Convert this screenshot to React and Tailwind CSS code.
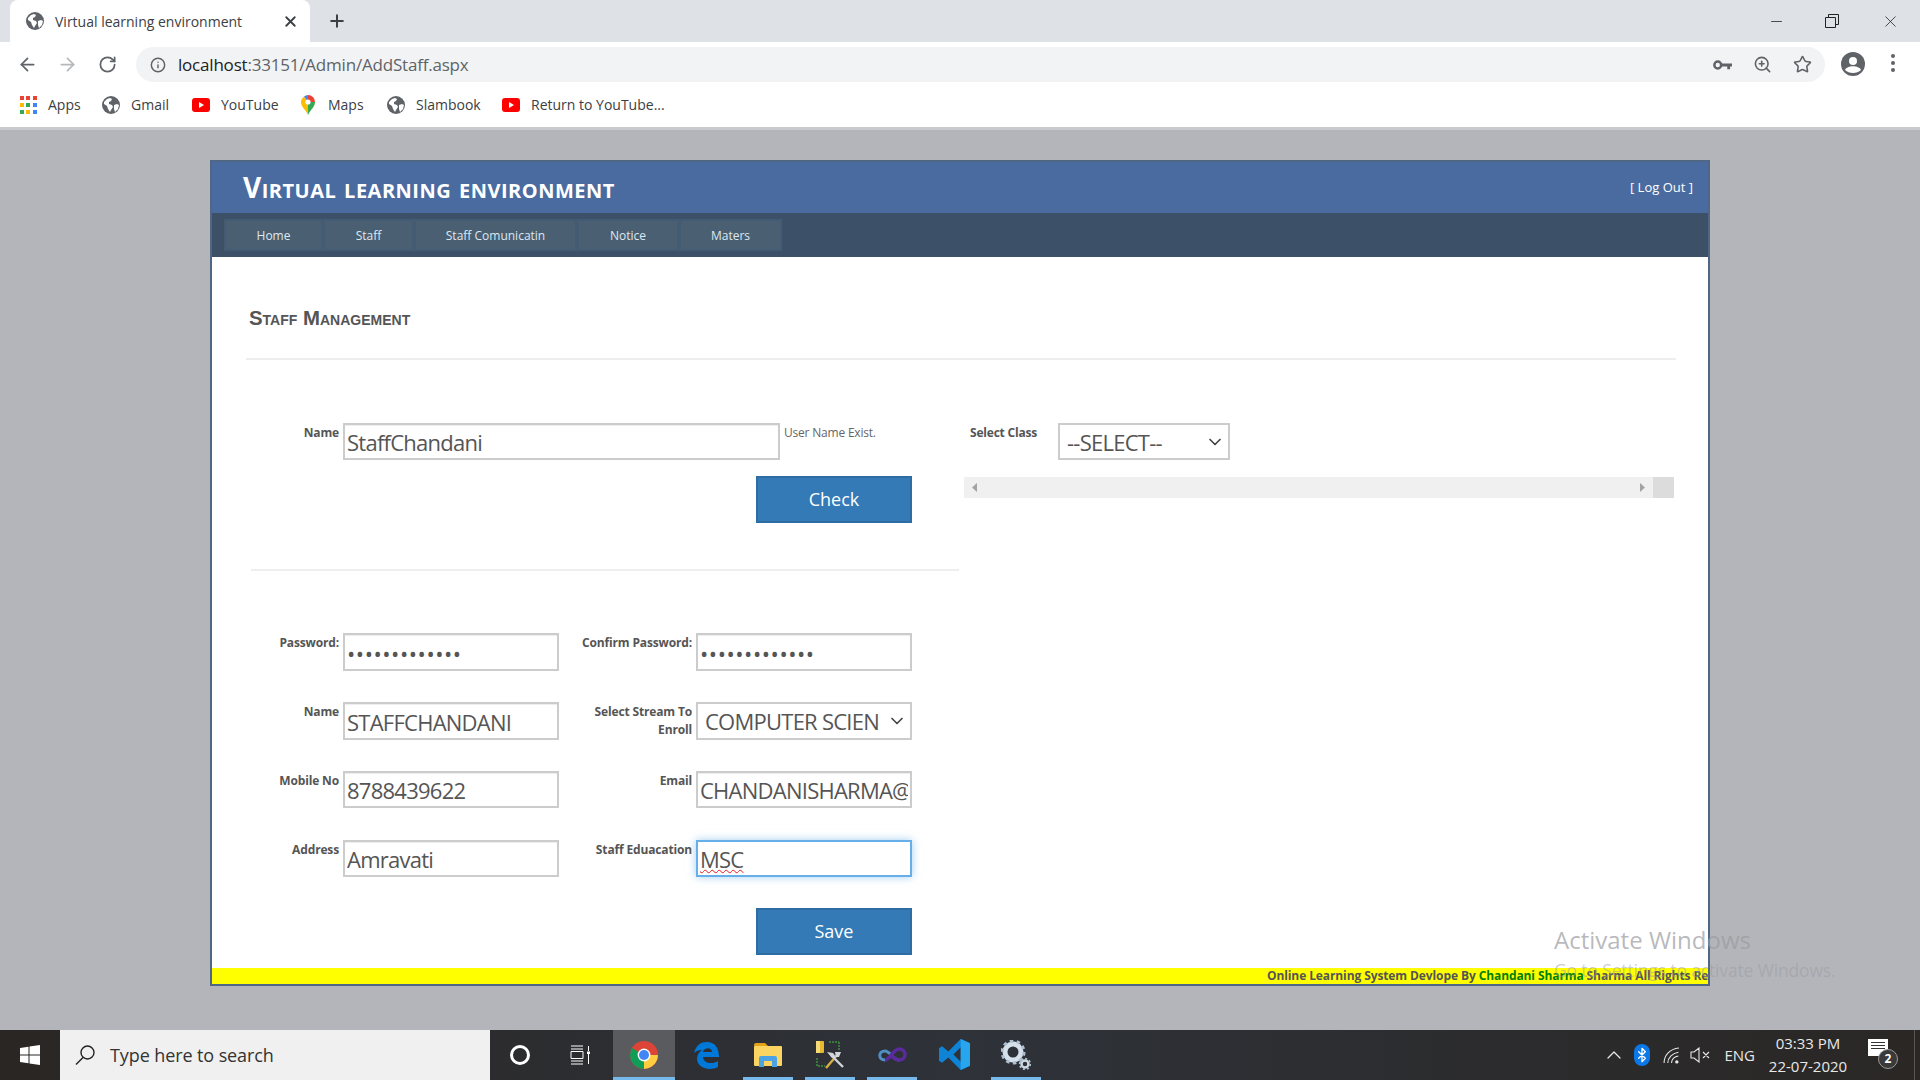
import React from 'react';
import { ArrowLeft, ArrowRight, RotateCw, Info, X, Plus, ZoomIn, Star, ChevronDown, ChevronUp, Bluetooth, Minus } from 'lucide-react';

const Globe = ({ className = 'w-[18px] h-[18px]' }) => (
    <svg viewBox="0 0 18 18" className={className}>
        <circle cx="9" cy="9" r="9" fill="#5f6368" />
        <path d="M2 6l3-3 3-1 2 1-1 2-2 1v2l3 1 1 2-2 3-1 2-2-3-1-3-3-2zM12 9l3-1 2 1-1 4-3 3-1-3z" fill="#fff" />
    </svg>
);

const YouTubeIcon = () => (
    <svg viewBox="0 0 18 18" className="w-[18px] h-[18px]">
        <rect x="0" y="2" width="18" height="14" rx="3" fill="#f00" />
        <path d="M7 6l5 3-5 3z" fill="#fff" />
    </svg>
);

const AppsIcon = () => {
    const colors = ['#ea4335', '#ea4335', '#ea4335', '#fbbc04', '#34a853', '#4285f4', '#34a853', '#fbbc04', '#4285f4'];
    return (
        <div className="grid grid-cols-3 gap-[3px] w-[17px] h-[17px]">
            {colors.map((c, i) => <span key={i} className="w-[4px] h-[4px]" style={{ background: c }} />)}
        </div>
    );
};

const MapsIcon = () => (
    <svg viewBox="0 0 14 20" className="w-[14px] h-[20px]">
        <path d="M7 20C5 15 0 12 0 7l7 0z" fill="#fbbc04" />
        <path d="M7 20c2-5 7-8 7-13H7z" fill="#34a853" />
        <path d="M0 7a7 7 0 0 1 3-5.500L7 7z" fill="#fbbc04" />
        <path d="M3 1.500A7 7 0 0 1 7 0v7z" fill="#4285f4" />
        <path d="M7 0a7 7 0 0 1 7 7H7z" fill="#ea4335" />
        <circle cx="7" cy="7" r="2.6" fill="#fff" />
    </svg>
);

const Bookmark = ({ icon, label, width }) => (
    <div className="flex items-center" style={{ width }}>
        <div className="w-[18px] flex justify-center shrink-0">{icon}</div>
        <span className="ml-[11px] text-[14px] text-[#3c4043] whitespace-nowrap">{label}</span>
    </div>
);

const TextField = ({ value, type = 'text', focused = false, wavy = false, h = 'h-[38px]' }) => (
    <input
        readOnly
        type={type}
        value={value}
        className={`w-full ${h} px-[2px] pt-[1px] text-[22px] ${type === 'password' ? 'tracking-[0.55px]' : 'tracking-[-0.75px]'} text-[#555] bg-white outline-none border-2 ${focused ? 'border-[#66afe9] shadow-[0_0_8px_rgba(102,175,233,0.6)]' : 'border-[#ccc] shadow-[inset_0_1px_1px_rgba(0,0,0,0.075)]'} ${wavy ? 'underline decoration-wavy decoration-[#e01b1b] decoration-1' : ''}`}
    />
);

const SelectBox = ({ value, h = 'h-[38px]' }) => (
    <div className={`flex items-center justify-between w-full ${h} pl-[7px] pr-[3px] border-2 border-[#ccc] bg-white text-[22px] tracking-[-0.75px] text-[#555] whitespace-nowrap overflow-hidden`}>
        <span className="pt-[1px]">{value}</span>
        <ChevronDown size={20} className="shrink-0 text-[#444]" />
    </div>
);

const Label = ({ children }) => (
    <div className="text-right text-[12px] leading-[18px] font-bold text-[#555] pt-[1px] tracking-[-0.15px]">{children}</div>
);

const SubmitButton = ({ children }) => (
    <button className="w-[156px] h-[47px] bg-[#337ab7] border-2 border-[#2e6da4] text-white text-[18px]">{children}</button>
);

const navItems = [
    { label: 'Home', w: 'w-[95px]' },
    { label: 'Staff', w: 'w-[87px]' },
    { label: 'Staff Comunicatin', w: 'w-[159px]' },
    { label: 'Notice', w: 'w-[98px]' },
    { label: 'Maters', w: 'w-[99px]' },
];

const formRows = [
    { label: 'Password:', field: <TextField type="password" value="staffchandani" />, label2: 'Confirm Password:', field2: <TextField type="password" value="staffchandani" /> },
    { label: 'Name', field: <TextField value="STAFFCHANDANI" />, label2: <>Select Stream To<br />Enroll</>, field2: <SelectBox value="COMPUTER SCIEN" /> },
    { label: 'Mobile No', field: <TextField value="8788439622" h="h-[37px]" />, label2: 'Email', field2: <TextField value="CHANDANISHARMA@GMAIL.COM" h="h-[37px]" /> },
    { label: 'Address', field: <TextField value="Amravati" h="h-[37px]" />, label2: 'Staff Eduacation', field2: <TextField value="MSC" focused wavy h="h-[37px]" /> },
];

// Taskbar logos
const ChromeLogo = () => (
    <svg viewBox="0 0 28 28" className="w-[28px] h-[28px]">
        <circle cx="14" cy="14" r="14" fill="#db4437" />
        <path d="M14 14L1.900 7A14 14 0 0 0 14 28l6-14z" fill="#0f9d58" />
        <path d="M14 14h13.900A14 14 0 0 1 14 28z" fill="#ffcd40" />
        <circle cx="14" cy="14" r="6.400" fill="#fff" />
        <circle cx="14" cy="14" r="5" fill="#4285f4" />
    </svg>
);

const EdgeLogo = () => (
    <svg viewBox="0 0 26 28" className="w-[26px] h-[28px]">
        <path d="M1 12C3 4 8 1 14 1c7 0 12 5 12 15H10c0 6 9 8 15 4v6c-8 4-20 2-21-8 0-4 2-7 5-9-3 0-6 1-8 3zM10 11h9c0-5-8-5-9 0z" fill="#0078d7" />
    </svg>
);

const FolderLogo = () => (
    <svg viewBox="0 0 28 24" className="w-[28px] h-[24px]">
        <path d="M0 2a2 2 0 0 1 2-2h9l3 3h-14z" fill="#e3a21a" />
        <rect y="3" width="28" height="20" rx="1" fill="#fcd462" />
        <path d="M5 24v-9a2 2 0 0 1 2-2h14a2 2 0 0 1 2 2v9h-5v-6h-8v6z" fill="#4ba3e3" />
    </svg>
);

const ToolsLogo = () => (
    <svg viewBox="0 0 30 30" className="w-[30px] h-[30px]">
        <rect x="1" y="1" width="8" height="12" rx="1" fill="#e8b92f" />
        <rect x="1" y="1" width="4" height="12" fill="#f5da7a" />
        <path d="M14 2h10M24 2v8M2 18v8h8" fill="none" stroke="#3f8f3f" strokeWidth="1.500" strokeDasharray="2 1" />
        <path d="M11 28L23 14" stroke="#d8b04a" strokeWidth="2.400" />
        <path d="M28 27L16 15" stroke="#cfd4da" strokeWidth="2.400" />
        <path d="M12 12l6 1 3 4-4 1zM20 12h6l-2 5-3 0z" fill="#d3d7dc" />
    </svg>
);

const VsLogo = () => (
    <svg viewBox="0 0 30 16" className="w-[30px] h-[16px]">
        <path d="M8 13c-7 0-7-9 0-9 5 0 8 9 14 9" fill="none" stroke="#4f8fc2" strokeWidth="3" />
        <path d="M8 13c5 0 8-11 14-11 8 0 8 11 0 11-3 0-5-2-7-4" fill="none" stroke="#5b2a9e" strokeWidth="3.400" />
    </svg>
);

const VsCodeLogo = () => (
    <svg viewBox="0 0 30 30" className="w-[31px] h-[31px]">
        <path d="M21 0l9 4v22l-9 4-12-12-6 5-3-2v-12l3-2 6 5zM21 8l-7 7 7 7z" fill="#0f84d6" />
        <path d="M21 0l9 4v22l-9 4z" fill="#28a6ed" />
    </svg>
);

const GearLogo = () => (
    <svg viewBox="0 0 30 30" className="w-[30px] h-[30px]">
        <circle cx="12" cy="12" r="8" fill="none" stroke="#d5e0ea" strokeWidth="5" />
        <circle cx="12" cy="12" r="11" fill="none" stroke="#aebfd0" strokeWidth="3" strokeDasharray="3.500 3.400" />
        <circle cx="24" cy="24" r="3.500" fill="none" stroke="#cfd8e0" strokeWidth="2.500" />
        <circle cx="24" cy="24" r="5.200" fill="none" stroke="#aebfd0" strokeWidth="2" strokeDasharray="2 2" />
    </svg>
);

const TaskIcon = ({ children, open = false, active = false }) => (
    <div className={`relative w-[62px] h-full flex items-center justify-center pb-[1px] ${active ? 'bg-[#5a5b5e]' : ''}`}>
        {children}
        {open && <span className={`absolute bottom-0 h-[3px] bg-[#76b9ed] ${active ? 'inset-x-0' : 'inset-x-[6px]'}`} />}
    </div>
);

const App = () => {
    return (
        <div className="relative w-[1920px] h-[1080px] overflow-hidden flex flex-col bg-[#b4b5ba] font-['Open_Sans',sans-serif]">
            {/* Tab strip */}
            <div className="h-[42px] shrink-0 bg-[#dee1e6] flex items-end">
                <div className="ml-[10px] w-[300px] h-[42px] bg-white rounded-t-[8px] flex items-center pl-[16px] pr-[11px]">
                    <Globe />
                    <span className="ml-[11px] text-[14px] text-[#3c4043]">Virtual learning environment</span>
                    <X size={17} strokeWidth={2.6} className="ml-auto text-[#3c4043]" />
                </div>
                <div className="ml-[17px] h-[42px] flex items-center">
                    <Plus size={20} strokeWidth={2.4} className="text-[#3c4043]" />
                </div>
                <div className="ml-auto h-[42px] flex items-center text-[#222]">
                    <Minus size={17} strokeWidth={1.1} className="mr-[40px]" />
                    <svg viewBox="0 0 14 14" className="w-[14px] h-[14px] mr-[42px]">
                        <path d="M0.500 3.500h10v10h-10zM3.500 3.500v-3h10v10h-3" fill="none" stroke="#222" />
                    </svg>
                    <X size={19} strokeWidth={1} className="mr-[20px]" />
                </div>
            </div>

            {/* Toolbar */}
            <div className="h-[40px] shrink-0 bg-white flex items-end">
                <ArrowLeft size={21} strokeWidth={2} className="ml-[17px] mb-[7px] text-[#5f6368]" />
                <ArrowRight size={21} strokeWidth={2} className="ml-[19px] mb-[7px] text-[#b5b8bb]" />
                <RotateCw size={19} strokeWidth={2.2} className="ml-[20px] mb-[8px] text-[#5f6368]" />
                <div className="ml-[19px] w-[1689px] h-[35px] rounded-full bg-[#f1f3f4] flex items-center pl-[14px] pr-[13px]">
                    <Info size={16} strokeWidth={2.2} className="text-[#5f6368]" />
                    <span className="ml-[12px] text-[17px] tracking-[-0.2px] text-[#5f6368]"><span className="text-[#202124]">localhost</span>:33151/Admin/AddStaff.aspx</span>
                    <svg viewBox="0 0 20 12" className="ml-auto w-[19px] h-[12px]">
                        <circle cx="5" cy="6" r="3.600" fill="none" stroke="#5f6368" strokeWidth="2.600" />
                        <path d="M9 4.500h11v3h-2v3h-3v-3h-6z" fill="#5f6368" />
                    </svg>
                    <ZoomIn size={19} strokeWidth={2} className="ml-[21px] text-[#5f6368]" />
                    <Star size={19} strokeWidth={2} className="ml-[21px] text-[#5f6368]" />
                </div>
                <svg viewBox="0 0 24 24" className="ml-[16px] mb-[6px] w-[24px] h-[24px]">
                    <circle cx="12" cy="12" r="12" fill="#5f6368" />
                    <circle cx="12" cy="9" r="4" fill="#fff" />
                    <path d="M4 18c2-5 14-5 16 0-4 4-12 4-16 0z" fill="#fff" />
                </svg>
                <div className="ml-[26px] mb-[10px] flex flex-col gap-[3px]">
                    <span className="w-[4px] h-[4px] rounded-full bg-[#5f6368]" />
                    <span className="w-[4px] h-[4px] rounded-full bg-[#5f6368]" />
                    <span className="w-[4px] h-[4px] rounded-full bg-[#5f6368]" />
                </div>
            </div>

            {/* Bookmarks bar */}
            <div className="h-[48px] shrink-0 bg-white border-b-[3px] border-[#c9cacd] flex items-center pl-[19px]">
                <Bookmark icon={<AppsIcon />} label="Apps" width="83px" />
                <Bookmark icon={<Globe />} label="Gmail" width="90px" />
                <Bookmark icon={<YouTubeIcon />} label="YouTube" width="107px" />
                <Bookmark icon={<MapsIcon />} label="Maps" width="88px" />
                <Bookmark icon={<Globe />} label="Slambook" width="115px" />
                <Bookmark icon={<YouTubeIcon />} label="Return to YouTube..." width="170px" />
            </div>

            {/* Page */}
            <div className="flex-1 min-h-0 pt-[30px]">
                <div className="ml-[210px] w-[1500px] h-[826px] border-2 border-[#4f6685] bg-white flex flex-col overflow-hidden">
                    <div className="h-[51px] shrink-0 bg-[#4a6b9f] flex items-center justify-between pl-[31px] pr-[15px]">
                        <span className="text-[28px] font-bold text-white [font-variant:small-caps] tracking-[0.5px] leading-none -mt-[2px]">Virtual learning environment</span>
                        <span className="text-[13px] text-white">[ Log Out ]</span>
                    </div>
                    <div className="h-[44px] shrink-0 bg-[#3c5068] flex items-center pl-[12px]">
                        <div className="flex gap-[4px] p-[2px] bg-[#445b74]">
                            {navItems.map((item) => (
                                <div key={item.label} className={`${item.w} h-[28px] pt-[1px] bg-[#4a5f72] flex items-center justify-center text-[12px] text-[#dde8f0]`}>
                                    {item.label}
                                </div>
                            ))}
                        </div>
                    </div>

                    <div className="flex-1 min-h-0">
                        <h2 className="mt-[49px] ml-[37px] text-[20.400px] leading-[24px] font-bold [font-variant:small-caps] text-[#555] font-['Liberation_Sans',sans-serif]">Staff Management</h2>
                        <div className="mt-[28px] ml-[34px] mr-[32px] h-[2px] bg-[#eee]" />

                        <div className="flex mt-[63px]">
                            <div className="ml-[39px] w-[708px] shrink-0">
                                <div className="flex">
                                    <div className="w-[88px] shrink-0"><Label>Name</Label></div>
                                    <div className="ml-[4px] w-[437px] shrink-0"><TextField value="StaffChandani" h="h-[37px]" /></div>
                                    <span className="ml-[4px] text-[12px] leading-[18px] pt-[1px] tracking-[-0.2px] text-[#666]">User Name Exist.</span>
                                </div>
                                <div className="mt-[16px] ml-[505px]"><SubmitButton>Check</SubmitButton></div>
                                <div className="mt-[46px] h-[2px] bg-[#eee]" />
                                <div className="mt-[62px] grid grid-cols-[88px_216px_129px_216px] gap-x-[4px] gap-y-[31px] auto-rows-[38px]">
                                    {formRows.map((row, i) => (
                                        <React.Fragment key={i}>
                                            <Label>{row.label}</Label>
                                            {row.field}
                                            <Label>{row.label2}</Label>
                                            {row.field2}
                                        </React.Fragment>
                                    ))}
                                </div>
                                <div className="mt-[30px] ml-[505px]"><SubmitButton>Save</SubmitButton></div>
                            </div>

                            <div className="ml-[5px] w-[710px] shrink-0">
                                <div className="flex">
                                    <div className="w-[94px] pl-[6px] text-[12px] leading-[18px] pt-[1px] font-bold tracking-[-0.2px] text-[#555] whitespace-nowrap">Select Class</div>
                                    <div className="w-[172px]"><SelectBox value="--SELECT--" h="h-[37px]" /></div>
                                </div>
                                <div className="mt-[17px] h-[21px] bg-[#f0f0f0] flex items-center">
                                    <svg viewBox="0 0 5 9" className="ml-[8px] w-[5px] h-[9px]"><path d="M5 0v9L0 4.500z" fill="#a3a3a3" /></svg>
                                    <svg viewBox="0 0 5 9" className="ml-auto mr-[8px] w-[5px] h-[9px]"><path d="M0 0v9l5-4.500z" fill="#a3a3a3" /></svg>
                                    <div className="w-[21px] h-full bg-[#dcdcdc]" />
                                </div>
                            </div>
                        </div>
                    </div>

                    <div className="h-[16px] shrink-0 bg-[#ffff00] flex justify-start pl-[1055px] overflow-hidden">
                        <span className="text-[12px] leading-[16px] font-bold tracking-[-0.1px] text-[#555] whitespace-nowrap">
                            Online Learning System Devlope By <span className="text-[#008000]">Chandani Sharma</span> Sharma All Rights Reserved
                        </span>
                    </div>
                </div>
            </div>

            {/* Taskbar */}
            <div className="h-[50px] shrink-0 flex bg-gradient-to-r from-[#2a2624] via-[#2e3239] to-[#2a2725]">
                <div className="w-[60px] flex items-center justify-center">
                    <svg viewBox="0 0 20 20" className="w-[20px] h-[20px]">
                        <path d="M0 3l8.500-1.200V9.500H0zM9.500 1.600L20 0v9.500H9.500zM0 10.500h8.500v7.700L0 17zM9.500 10.500H20V20L9.500 18.400z" fill="#fff" />
                    </svg>
                </div>
                <div className="w-[430px] bg-[#f0f0f0] flex items-center pl-[15px]">
                    <svg viewBox="0 0 20 20" className="w-[20px] h-[20px]">
                        <circle cx="12.500" cy="7.500" r="6.500" fill="none" stroke="#222" strokeWidth="1.400" />
                        <path d="M8 12.500L1 19.500" stroke="#222" strokeWidth="1.400" />
                    </svg>
                    <span className="ml-[15px] text-[18px] tracking-[-0.1px] text-[#333]">Type here to search</span>
                </div>
                <div className="flex -ml-[1px]">
                    <TaskIcon>
                        <span className="w-[20px] h-[20px] rounded-full border-[3px] border-white" />
                    </TaskIcon>
                    <TaskIcon>
                        <svg viewBox="0 0 20 20" className="w-[20px] h-[20px] mr-[4px]">
                            <path d="M1 1h12M1 4h12M1 6.500h12v7H1zM1 16h12M1 19h12M18.500 1v5M18.500 9v10" fill="none" stroke="#fff" strokeWidth="1" />
                            <rect x="17" y="6.500" width="3" height="2.500" fill="#fff" />
                        </svg>
                    </TaskIcon>
                    <TaskIcon open active><ChromeLogo /></TaskIcon>
                    <TaskIcon><EdgeLogo /></TaskIcon>
                    <TaskIcon open><FolderLogo /></TaskIcon>
                    <TaskIcon open><ToolsLogo /></TaskIcon>
                    <TaskIcon open><VsLogo /></TaskIcon>
                    <TaskIcon><VsCodeLogo /></TaskIcon>
                    <TaskIcon open><GearLogo /></TaskIcon>
                </div>
                <div className="ml-auto flex items-center text-[#e8e8e8]">
                    <ChevronUp size={24} strokeWidth={1.3} className="mr-[8px]" />
                    <div className="w-[16px] h-[22px] rounded-full bg-[#0a78e6] flex items-center justify-center mr-[13px]">
                        <Bluetooth size={16} strokeWidth={2} className="text-white" />
                    </div>
                    <svg viewBox="0 0 16 16" className="w-[17px] h-[17px] mr-[10px]">
                        <path d="M1 15C1 8 6 2 15 1M4.500 15c0-5 4-9 10-10M8 15c0-3 2.500-6 6.500-6.500" fill="none" stroke="#e8e8e8" strokeWidth="1" />
                        <circle cx="13" cy="14" r="1.600" fill="#e8e8e8" />
                    </svg>
                    <svg viewBox="0 0 20 16" className="w-[20px] h-[16px] mr-[14px]">
                        <path d="M1 5h3l5-4v14l-5-4H1zM13 5l6 6M19 5l-6 6" fill="none" stroke="#e8e8e8" strokeWidth="1.100" />
                    </svg>
                    <span className="text-[15px]">ENG</span>
                    <div className="ml-[14px] w-[78px] flex flex-col items-center text-[15px] leading-[23px] whitespace-nowrap">
                        <span>03:33 PM</span>
                        <span>22-07-2020</span>
                    </div>
                    <div className="relative ml-[21px] mr-[14px] w-[32px] h-[32px]">
                        <div className="w-[20px] h-[17px] bg-white flex flex-col gap-[2px] px-[3px] pt-[3px]">
                            <span className="h-[1px] bg-[#333]" />
                            <span className="h-[1px] bg-[#333]" />
                            <span className="h-[1px] bg-[#333]" />
                        </div>
                        <span className="absolute left-[10px] top-[10px] w-[20px] h-[20px] rounded-full bg-[#3a3a3a] border border-[#999] flex items-center justify-center text-[12px] font-bold text-white">2</span>
                    </div>
                    <span className="w-[1px] h-full bg-[#555] mr-[5px]" />
                </div>
            </div>

            {/* Windows watermark over the page */}
            <div className="absolute left-[1554px] top-[922px] pointer-events-none whitespace-nowrap">
                <div className="text-[24px] leading-[36px] text-[#9a9a9f]/70">Activate Windows</div>
                <div className="text-[17.500px] leading-[22px] mt-[1px] tracking-[-0.15px] text-[#9a9a9f]/50">Go to Settings to activate Windows.</div>
            </div>
        </div>
    );
};

export default App;
